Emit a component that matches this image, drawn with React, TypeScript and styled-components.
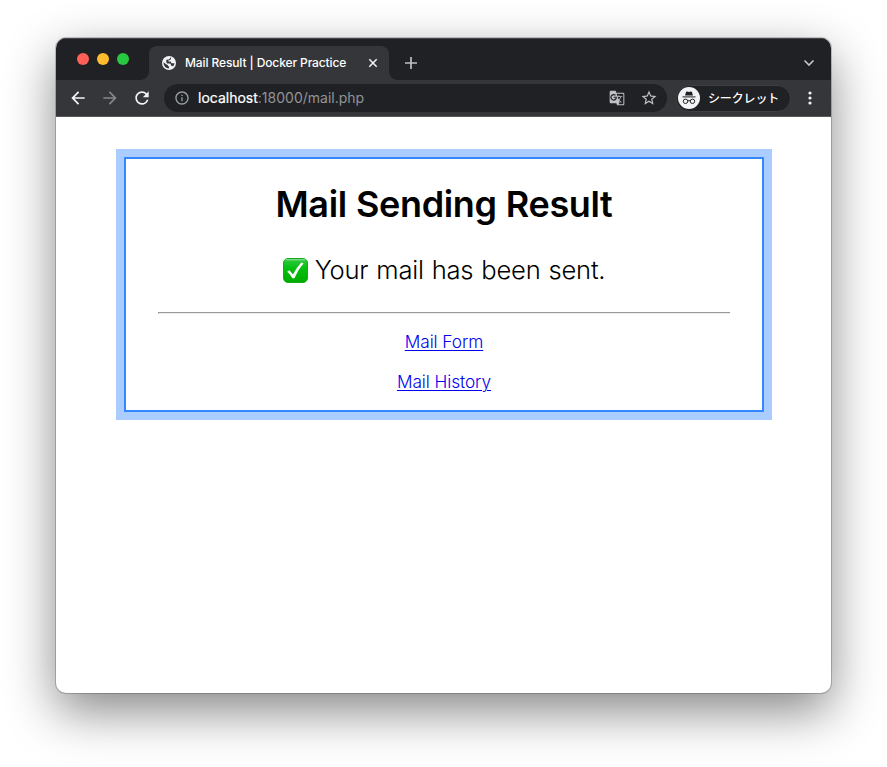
import React from 'react';
import styled, { createGlobalStyle } from 'styled-components';
import { MdArrowBack, MdArrowForward, MdRefresh, MdInfoOutline, MdGTranslate, MdStarBorder } from 'react-icons/md';

const GlobalStyle = createGlobalStyle`
  * { box-sizing: border-box; }
  body { margin: 0; background: #fff; }
`;

const Desktop = styled.div`
  height: 767px;
  padding: 38px 56px 74px;
  overflow: hidden;
`;

const BrowserWindow = styled.div`
  display: flex;
  flex-direction: column;
  height: 655px;
  border-radius: 10px;
  overflow: hidden;
  background: #fff;
  font-family: Inter, 'Noto Sans CJK JP', sans-serif;
  box-shadow: 0 0 0 1px rgba(0, 0, 0, 0.2), 0 18px 50px rgba(0, 0, 0, 0.48);
`;

const TabStrip = styled.div`
  display: flex;
  height: 42px;
  padding: 8px 15px 0 21px;
  background: #202124;
  box-shadow: inset 0 1px 0 #46474a;
`;

const Lights = styled.div`
  display: flex;
  gap: 8px;
  margin-top: 7px;
`;

const Light = styled.span<{ $color: string }>`
  width: 12px;
  height: 12px;
  border-radius: 50%;
  background: ${({ $color }) => $color};
`;

const Tab = styled.div`
  position: relative;
  display: flex;
  align-items: center;
  width: 240px;
  height: 34px;
  margin-left: 20px;
  padding: 0 10px 0 13px;
  border-radius: 8px 8px 0 0;
  background: #35363a;
  color: #fff;

  &::before,
  &::after {
    content: '';
    position: absolute;
    bottom: 0;
    width: 8px;
    height: 8px;
  }
  &::before {
    left: -8px;
    background: radial-gradient(circle at 0 0, transparent 7.5px, #35363a 8px);
  }
  &::after {
    right: -8px;
    background: radial-gradient(circle at 100% 0, transparent 7.5px, #35363a 8px);
  }
`;

const TabTitle = styled.span`
  flex: 1;
  margin-left: 9px;
  font-size: 12px;
  font-weight: 500;
  line-height: 16px;
  letter-spacing: -0.11px;
  white-space: nowrap;
`;

const NewTab = styled.div`
  display: flex;
  margin: 10px 0 0 15px;
`;

const TabSearch = styled.div`
  display: flex;
  margin: 12px 1px 0 auto;
`;

const Toolbar = styled.div`
  display: flex;
  align-items: center;
  height: 37px;
  flex: none;
  padding: 0 12px;
  background: #35363a;
  border-bottom: 1px solid #57585b;
`;

const NavButton = styled.span<{ $disabled?: boolean }>`
  display: flex;
  width: 32px;
  color: ${({ $disabled }) => ($disabled ? '#85868a' : '#f1f3f4')};
`;

const AddressBar = styled.div`
  display: flex;
  align-items: center;
  width: 503px;
  height: 28px;
  padding: 0 9px 0 10px;
  flex: none;
  border-radius: 14px;
  background: #202124;
  color: #9aa0a6;
`;

const Address = styled.span`
  flex: 1;
  margin-left: 8px;
  font-size: 14px;
  line-height: 20px;
  color: #919498;
`;

const Host = styled.span`
  color: #fff;
  -webkit-text-stroke: 0.2px #fff;
`;

const AddressActions = styled.span`
  display: flex;
  align-items: center;
  gap: 15px;
  color: #bdc1c6;
`;

const Incognito = styled.div`
  display: flex;
  align-items: center;
  width: 115px;
  height: 27px;
  margin-left: 9px;
  padding-left: 1px;
  flex: none;
  border: 1px solid #3e3f43;
  border-radius: 14px;
  background: #202124;
  color: #fff;
  font: 500 12px/18px 'Noto Sans CJK JP', sans-serif;
  letter-spacing: -0.15px;
  white-space: nowrap;
`;

const IncognitoLabel = styled.span`
  margin-left: 8px;
`;

const MoreButton = styled.span`
  display: flex;
  margin-left: 16.5px;
`;

const Page = styled.main`
  flex: 1;
  padding: 40px 67px 0 68px;
`;

const Card = styled.section`
  height: 255px;
  padding: 25px 32px 0;
  border: 2px solid #3388ff;
  box-shadow: 0 0 0 8px #aaccff;
  text-align: center;
  color: #000;
`;

const Heading = styled.h1`
  margin: 0;
  font-size: 36px;
  font-weight: 600;
  line-height: 40px;
  letter-spacing: -0.36px;
  word-spacing: 0.5px;
  white-space: nowrap;
`;

const Message = styled.p`
  display: flex;
  justify-content: center;
  align-items: center;
  gap: 7px;
  margin: 31px 0 0;
  font-size: 25.6px;
  font-weight: 350;
  line-height: 30px;
  letter-spacing: -0.23px;
  word-spacing: 1px;
  white-space: nowrap;
`;

const Rule = styled.hr`
  height: 2px;
  margin: 27px 0 16px;
  border: 0;
  border-top: 1px solid #999;
  border-left: 1px solid #999;
  border-bottom: 1px solid #eee;
`;

const LinkRow = styled.p`
  margin: 0 0 16px;
  font-size: 17.3px;
  font-weight: 350;
  line-height: 24px;
  letter-spacing: -0.08px;
`;

const Link = styled.a`
  color: #0000ee;
  text-decoration: underline;
  text-decoration-thickness: 1px;
  text-underline-offset: 2px;
`;

const GlobeIcon = () => (
  <svg width="14" height="14" viewBox="0 0 14 14">
    <circle cx="7" cy="7" r="7" fill="#f1f3f4" />
    <g fill="#35363a">
      <path d="M8.300 1.500 9.100 1.700 9 3 7.800 4.300H6.400V5.600H8.600L9.500 7.200H12.500Q12.300 9.300 11 10.500L10.300 9.700H8.900V8.200L8.200 7.500H5.200L4.300 6.300V3.700L7 3.500 8 2.600Z" />
      <path d="M1.500 6.200 4.500 8.400 6 9.200V10.300H7V12.500Q2.100 12.100 1.500 7.200Z" />
    </g>
  </svg>
);

const IncognitoIcon = () => (
  <svg width="22" height="22" viewBox="0 0 22 22">
    <circle cx="11" cy="11" r="11" fill="#f1f3f4" />
    <path d="M7 8.400 8 5.200Q8.300 4.400 9.100 4.600L11 5l1.900-.4q.8-.2 1.100.6L15 8.400z" fill="#202124" />
    <path d="M4.500 9.900h13" stroke="#202124" strokeWidth="1" />
    <g fill="none" stroke="#202124" strokeWidth="1">
      <circle cx="7.500" cy="14.300" r="2.200" />
      <circle cx="14.500" cy="14.300" r="2.200" />
      <path d="M9.700 14q1.300-.8 2.600 0" />
    </g>
  </svg>
);

const CheckIcon = () => (
  <svg width="25" height="25" viewBox="0 0 25 25">
    <defs>
      <linearGradient id="checkFill" x2="0" y2="1">
        <stop offset="0" stopColor="#35c94b" />
        <stop offset=".4" stopColor="#05bf10" />
        <stop offset="1" stopColor="#00ad00" />
      </linearGradient>
    </defs>
    <rect x=".5" y=".5" width="24" height="24" rx="4.500" fill="url(#checkFill)" stroke="#16a91d" />
    <path d="M3 1.800h19" stroke="#91e39a" strokeLinecap="round" />
    <path d="M4.200 13.800 6.400 12.200 10 16.500Q13.400 9.500 18.300 4.500L20.600 5.200Q14.600 12 11.400 20.200H9.300Q7.400 16.500 4.200 13.800Z" fill="#fff" />
  </svg>
);

export default function App() {
  return (
    <>
      <GlobalStyle />
      <Desktop>
        <BrowserWindow>
          <TabStrip>
            <Lights>
              <Light $color="#ff5f57" />
              <Light $color="#febc2e" />
              <Light $color="#28c840" />
            </Lights>
            <Tab>
              <GlobeIcon />
              <TabTitle>Mail Result | Docker Practice</TabTitle>
              <svg width="12" height="12" viewBox="0 0 12 12">
                <path d="M2.300 2.300l7.400 7.400M9.700 2.300l-7.400 7.400" stroke="#f1f3f4" strokeWidth="1.500" />
              </svg>
            </Tab>
            <NewTab>
              <svg width="14" height="14" viewBox="0 0 14 14">
                <path d="M7 1v12M1 7h12" stroke="#bdc1c6" strokeWidth="1.700" />
              </svg>
            </NewTab>
            <TabSearch>
              <svg width="12" height="10" viewBox="0 0 12 10">
                <path d="M1.500 2.500 6 7l4.500-4.500" fill="none" stroke="#c3c5c8" strokeWidth="1.600" />
              </svg>
            </TabSearch>
          </TabStrip>
          <Toolbar>
            <NavButton><MdArrowBack size={20} /></NavButton>
            <NavButton $disabled><MdArrowForward size={20} /></NavButton>
            <NavButton><MdRefresh size={20} /></NavButton>
            <AddressBar>
              <MdInfoOutline size={16} />
              <Address><Host>localhost</Host>:18000/mail.php</Address>
              <AddressActions>
                <MdGTranslate size={16} />
                <MdStarBorder size={18} />
              </AddressActions>
            </AddressBar>
            <Incognito>
              <IncognitoIcon />
              <IncognitoLabel>シークレット</IncognitoLabel>
            </Incognito>
            <MoreButton>
              <svg width="4" height="14" viewBox="0 0 4 14" fill="#f1f3f4">
                <circle cx="2" cy="2" r="1.600" />
                <circle cx="2" cy="7" r="1.600" />
                <circle cx="2" cy="12" r="1.600" />
              </svg>
            </MoreButton>
          </Toolbar>
          <Page>
            <Card>
              <Heading>Mail Sending Result</Heading>
              <Message>
                <CheckIcon />
                <span>Your mail has been sent.</span>
              </Message>
              <Rule />
              <LinkRow><Link href="#">Mail Form</Link></LinkRow>
              <LinkRow><Link href="#">Mail History</Link></LinkRow>
            </Card>
          </Page>
        </BrowserWindow>
      </Desktop>
    </>
  );
}
